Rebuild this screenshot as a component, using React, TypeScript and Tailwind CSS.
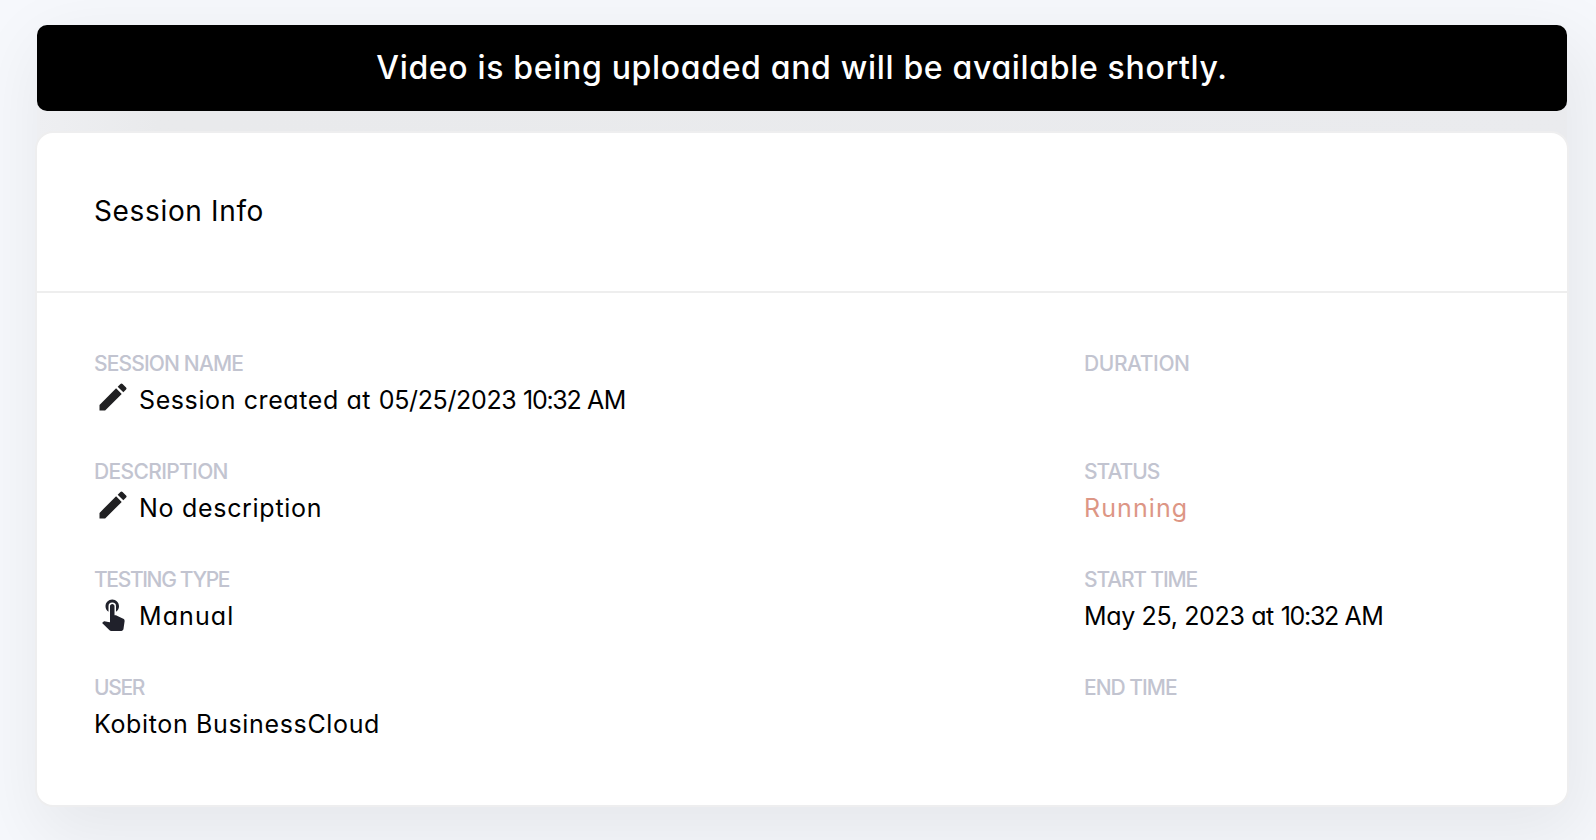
import type { ReactNode } from "react";
import { MdEdit, MdTouchApp } from "react-icons/md";

type FieldProps = {
  label: string;
  labelClass: string;
  icon?: ReactNode;
  children?: ReactNode;
};

function Field({ label, labelClass, icon, children }: FieldProps) {
  return (
    <div className="h-[72px]">
      <div className={`text-[21px] leading-8 font-medium whitespace-nowrap text-[#c2c4d0] ${labelClass}`}>
        {label}
      </div>
      <div className="flex h-10 items-start gap-2 text-[25px] leading-10 whitespace-pre text-black">
        {icon}
        <div>{children}</div>
      </div>
    </div>
  );
}

const pencil = <MdEdit className="-mt-px ml-px size-9 shrink-0 text-[#202022]" />;
const touch = <MdTouchApp className="-mt-px ml-px size-9 shrink-0 text-[#20212b]" />;

export default function App() {
  return (
    <div className="flex h-[840px] w-full flex-col overflow-hidden bg-[#f6f8fc] pt-[25px] pr-[29px] pb-[35px] pl-[37px] font-['Inter',sans-serif] [font-feature-settings:'cv11']">
      <div className="flex flex-1 flex-col gap-[22px] rounded-2xl bg-linear-to-r from-[#eeeff2] via-[#e9eaec] via-8% to-[#eaebee] shadow-[8px_24px_70px_10px_rgba(0,0,0,0.065)]">
        <div className="flex h-[86px] items-center justify-center rounded-[10px] bg-black">
          <p className="text-[32px] leading-10 font-medium tracking-[0.67px] whitespace-nowrap text-white">
            Video is being uploaded and will be available shortly.
          </p>
        </div>

        <section className="flex-1 rounded-2xl bg-white shadow-[0_0_0_2px_#eeeeef]">
          <header className="flex h-40 items-center border-b-2 border-[#eeeeee] pl-[57px]">
            <h1 className="pb-[3px] text-[28px] leading-10 tracking-[0.65px] text-black">Session Info</h1>
          </header>

          <div className="grid grid-cols-[990px_1fr] pt-[55px] pl-[57px]">
            <div className="flex flex-col gap-9">
              <Field label="SESSION NAME" labelClass="tracking-[-0.85px]" icon={pencil}>
                <span className="tracking-[0.6px]">Session created at </span>
                <span className="tracking-[-0.35px]">05/25/2023 </span>
                <span className="tracking-[-1.3px]">10:32</span>
                <span className="tracking-[-0.5px]"> AM</span>
              </Field>
              <Field label="DESCRIPTION" labelClass="tracking-[-0.65px]" icon={pencil}>
                <span className="tracking-[0.7px]">No description</span>
              </Field>
              <Field label="TESTING TYPE" labelClass="tracking-[-1.35px]" icon={touch}>
                <span className="tracking-[1.1px]">Manual</span>
              </Field>
              <Field label="USER" labelClass="tracking-[-1.3px]">
                <span className="tracking-[0.65px]">Kobiton BusinessCloud</span>
              </Field>
            </div>

            <div className="flex flex-col gap-9">
              <Field label="DURATION" labelClass="tracking-[-0.4px]" />
              <Field label="STATUS" labelClass="tracking-[-1px]">
                <span className="tracking-[1.1px] text-[#dd9685]">Running</span>
              </Field>
              <Field label="START TIME" labelClass="tracking-[-1.15px]">
                <span className="tracking-[-0.35px]">May 25, 2023 at </span>
                <span className="tracking-[-1.3px]">10:32</span>
                <span className="tracking-[-0.5px]"> AM</span>
              </Field>
              <Field label="END TIME" labelClass="tracking-[-1px]" />
            </div>
          </div>
        </section>
      </div>
    </div>
  );
}
